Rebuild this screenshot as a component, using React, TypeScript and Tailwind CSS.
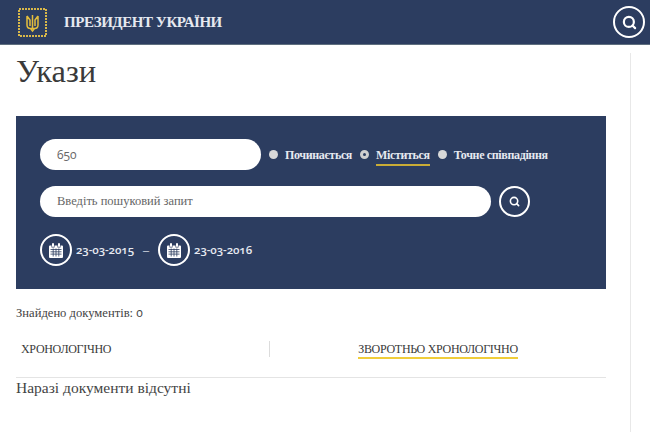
import { Search } from "lucide-react";

const serif = "font-['Liberation_Serif','DejaVu_Serif',serif]";
const digits = "font-['Open_Sans',sans-serif] [font-variant-numeric:oldstyle-nums]";

function Trident() {
  return (
    <svg width="29" height="29" viewBox="0 0 29 29" fill="none">
      <rect x="1" y="1" width="27" height="27" stroke="#d9b84a" strokeWidth="2" strokeDasharray="2 1" />
      <path
        d="M14.500 7v13M14.500 23l-2-2.500h4zM9 8v9c0 2 1.500 3.500 3.500 3.500M20 8v9c0 2-1.500 3.500-3.500 3.500M9 8l3 4v6M20 8l-3 4v6"
        stroke="#e3bd3d"
        strokeWidth="1.500"
      />
    </svg>
  );
}

function CalendarIcon() {
  return (
    <svg width="14" height="15" viewBox="0 0 14 15" fill="#fff">
      <rect x="3" y="0" width="2" height="4" rx="1" />
      <rect x="9" y="0" width="2" height="4" rx="1" />
      <path d="M0 3.500a1 1 0 0 1 1-1h1.500v2h3v-2h3v2h3v-2H13a1 1 0 0 1 1 1V14a1 1 0 0 1-1 1H1a1 1 0 0 1-1-1z" />
      <path
        d="M1.500 6.500h11M1.500 8.800h11M1.500 11.100h11M4.200 5.500v8M7 5.500v8M9.800 5.500v8"
        stroke="#2c3d60"
        strokeWidth="0.800"
      />
    </svg>
  );
}

function Radio({ label, active }: { label: string; active?: boolean }) {
  return (
    <div className="flex items-center gap-[7px]">
      <span
        className={
          active
            ? "w-[9px] h-[9px] rounded-full bg-[#2c3d60] border-[3px] border-[#cfcfcf]"
            : "w-[9px] h-[9px] rounded-full bg-[#d8d8d8]"
        }
      />
      <span
        className={
          active
            ? "text-[12px] leading-[16px] tracking-[-0.35px] font-bold text-[#e6e9f0] border-b-2 border-[#c9ac36] pb-[1px] mt-[3px]"
            : "text-[12px] leading-[16px] tracking-[-0.35px] font-bold text-[#e6e9f0]"
        }
      >
        {label}
      </span>
    </div>
  );
}

function DateBox({ value }: { value: string }) {
  return (
    <div className="flex items-center gap-[4px]">
      <span className="w-[32px] h-[32px] rounded-full border-2 border-white flex items-center justify-center">
        <CalendarIcon />
      </span>
      <span className={`text-[11.5px] tracking-[-0.1px] font-semibold text-[#e6e9f0] ${digits}`}>{value}</span>
    </div>
  );
}

export default function App() {
  return (
    <div className={`w-[650px] h-[432px] overflow-hidden bg-white text-[#3a3a3a] ${serif}`}>
      {/* HEADER */}
      <header className="h-[45px] bg-[#2c3d60] border-b border-[#5f6f7f] flex items-center justify-between pl-[18px] pr-[5px]">
        <div className="flex items-center gap-[17px]">
          <Trident />
          <span className="text-[15px] tracking-[-0.45px] font-bold text-[#e6e9f0]">ПРЕЗИДЕНТ УКРАЇНИ</span>
        </div>
        <span className="w-[32px] h-[32px] rounded-full border-2 border-white flex items-center justify-center">
          <Search size={15} className="text-white" strokeWidth={3.500} />
        </span>
      </header>

      <main className="w-[631px] h-[387px] border-r border-[#e8e8e8] pl-4 pr-[24px]">
        <h1 className="text-[32.5px] leading-[36px] mt-[8px] text-[#3a3a3a]">Укази</h1>

        {/* SEARCH PANEL */}
        <section className="mt-[27px] h-[173px] bg-[#2c3d60] pl-[24px] pt-[23px]">
          <div className="flex items-center h-[31px]">
            <div className={`w-[221px] h-[31px] rounded-full bg-white pl-[17px] flex items-center text-[12px] text-[#666] ${digits}`}>
              650
            </div>
            <div className="flex items-center gap-[8px] ml-[8px]">
              <Radio label="Починається" />
              <Radio label="Міститься" active />
              <Radio label="Точне співпадіння" />
            </div>
          </div>

          <div className="flex items-center gap-[8px] mt-[16px]">
            <div className="w-[451px] h-[31px] rounded-full bg-white pl-[17px] flex items-center text-[12.5px] text-[#666]">
              Введіть пошуковий запит
            </div>
            <span className="w-[31px] h-[31px] rounded-full border-2 border-white flex items-center justify-center">
              <Search size={11} className="text-white" strokeWidth={3.500} />
            </span>
          </div>

          <div className="flex items-center mt-[17px]">
            <DateBox value="23-03-2015" />
            <span className="text-[#e6e9f0] text-[12px] ml-[9px] mr-[9px]">–</span>
            <DateBox value="23-03-2016" />
          </div>
        </section>

        <p className="text-[12.6px] leading-[16px] mt-[16px] text-[#444]">
          Знайдено документів: <span className={`text-[12px] ${digits}`}>0</span>
        </p>

        {/* SORT */}
        <div className="mt-[20px] h-[37px] flex items-start border-b border-[#e4e4e4] text-[12px] leading-[16px] tracking-[-0.3px] text-[#3a3a3a]">
          <div className="w-[254px] h-[16px] pl-[5px] border-r border-[#dcdcdc] shrink-0">ХРОНОЛОГІЧНО</div>
          <div className="flex-1 flex justify-center">
            <span className="border-b-2 border-[#f0cd3a]">ЗВОРОТНЬО ХРОНОЛОГІЧНО</span>
          </div>
        </div>

        <p className="text-[15.5px] leading-[20px] text-[#444]">Наразі документи відсутні</p>
      </main>
    </div>
  );
}
